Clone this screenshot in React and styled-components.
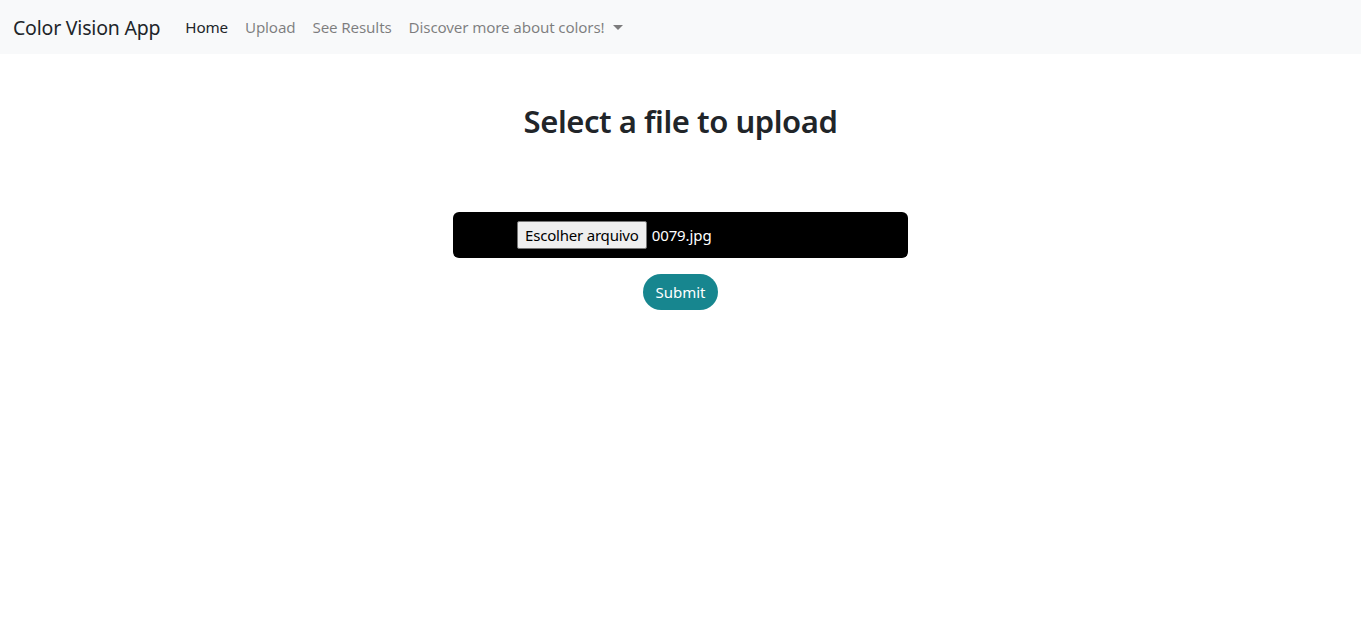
import React from 'react';
import styled, { createGlobalStyle } from 'styled-components';

const GlobalStyle = createGlobalStyle`
  html, body {
    margin: 0;
    padding: 0;
    background: #fff;
    font-family: "Noto Sans", "Open Sans", sans-serif;
    color: #212529;
  }
`;

const Navbar = styled.nav`
  display: flex;
  align-items: center;
  height: 54px;
  padding: 0 13px;
  background-color: #f8f9fa;
  box-sizing: border-box;
`;

const Brand = styled.a`
  font-size: 19.5px;
  color: #212529;
  margin-right: 25px;
  letter-spacing: -0.2px;
  text-decoration: none;
`;

const NavList = styled.div`
  display: flex;
  align-items: center;
  gap: 17px;
`;

const NavLink = styled.a`
  display: flex;
  align-items: center;
  font-size: 15.2px;
  letter-spacing: -0.15px;
  color: ${props => (props.active ? '#212529' : 'rgba(0, 0, 0, 0.5)')};
  text-decoration: none;
  cursor: pointer;
`;

const Caret = styled.span`
  display: inline-block;
  margin-left: 9px;
  width: 0;
  height: 0;
  border-left: 5px solid transparent;
  border-right: 5px solid transparent;
  border-top: 5px solid rgba(0, 0, 0, 0.5);
`;

const Main = styled.main`
  display: flex;
  flex-direction: column;
  align-items: center;
  padding-top: 46px;
`;

const Title = styled.h2`
  margin: 0 0 70px;
  font-size: 31px;
  font-weight: 600;
  letter-spacing: -0.45px;
  color: #212529;
`;

const FileBox = styled.div`
  display: flex;
  align-items: center;
  box-sizing: border-box;
  width: 455px;
  height: 46px;
  padding-left: 64px;
  background: #000;
  border-radius: 6px;
`;

const FileButton = styled.span`
  display: inline-flex;
  align-items: center;
  height: 28px;
  padding: 0 7px;
  box-sizing: border-box;
  background: #efefef;
  border: 1px solid #767676;
  border-radius: 2px;
  font-size: 15px;
  letter-spacing: -0.2px;
  color: #000;
`;

const FileName = styled.span`
  margin-left: 5px;
  font-size: 15px;
  letter-spacing: -0.1px;
  color: #fff;
`;

const Submit = styled.button`
  margin-top: 16px;
  height: 36px;
  padding: 0 12px;
  border: none;
  border-radius: 18px;
  background: #17868f;
  color: #fff;
  font-family: inherit;
  font-size: 15px;
  cursor: pointer;
`;

export default function App() {
  return (
    <>
      <GlobalStyle />
      <Navbar>
        <Brand>Color Vision App</Brand>
        <NavList>
          <NavLink active>Home</NavLink>
          <NavLink>Upload</NavLink>
          <NavLink>See Results</NavLink>
          <NavLink>
            Discover more about colors!
            <Caret />
          </NavLink>
        </NavList>
      </Navbar>
      <Main>
        <Title>Select a file to upload</Title>
        <FileBox>
          <FileButton>Escolher arquivo</FileButton>
          <FileName>0079.jpg</FileName>
        </FileBox>
        <Submit>Submit</Submit>
      </Main>
    </>
  );
}
